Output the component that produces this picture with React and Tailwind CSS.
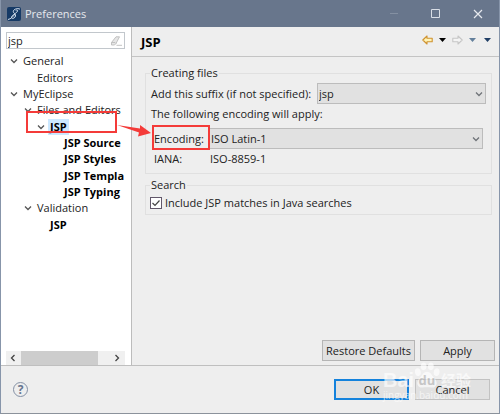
import React from "react";

const tree = [
  { label: "General", pad: "pl-[4px]", open: true },
  { label: "Editors", pad: "pl-[18px]" },
  { label: "MyEclipse", pad: "pl-[4px]", open: true },
  { label: "Files and Editors", pad: "pl-[18px]", open: true },
  { label: "JSP", pad: "pl-[31px]", open: true, bold: true, selected: true },
  { label: "JSP Source", pad: "pl-[45px]", bold: true },
  { label: "JSP Styles", pad: "pl-[45px]", bold: true },
  { label: "JSP Templa", pad: "pl-[45px]", bold: true },
  { label: "JSP Typing", pad: "pl-[45px]", bold: true },
  { label: "Validation", pad: "pl-[18px]", open: true },
  { label: "JSP", pad: "pl-[31px]", bold: true },
];

function Chevron({ className }) {
  return (
    <svg viewBox="0 0 8 8" className={className} fill="none" stroke="currentColor" strokeWidth="1.3" aria-hidden="true">
      <path d="M1 2.500 4 5.500 7 2.500" />
    </svg>
  );
}

function Triangle({ className }) {
  return (
    <svg viewBox="0 0 7 4" className={className} fill="currentColor" aria-hidden="true">
      <path d="M0 0h7L3.5 4z" />
    </svg>
  );
}

function Arrow({ className, fill }) {
  return (
    <svg viewBox="0 0 11 10" className={className} fill={fill} stroke="currentColor" strokeWidth="1.1" strokeLinejoin="round" aria-hidden="true">
      <path d="M.8 5 5 1v2.200h5.200v3.600H5V9z" />
    </svg>
  );
}

function Combo({ id, value, className }) {
  return (
    <div className={`relative h-[21px] ${className}`}>
      <select id={id} defaultValue={value} className="block h-full w-full appearance-none border border-[#bcbcbc] bg-[#e1e1e1] pr-5 pl-px text-[11px] leading-4 outline-none">
        <option>{value}</option>
      </select>
      <Chevron className="pointer-events-none absolute top-[7px] right-[3px] size-2 text-[#707479]" />
    </div>
  );
}

function Group({ title, className, children }) {
  return (
    <fieldset className={`min-w-0 border border-[#e0e0e0] ${className}`}>
      <legend className="ml-1 px-px leading-4">{title}</legend>
      {children}
    </fieldset>
  );
}

function Button({ children, className }) {
  return (
    <button type="button" className={`h-[21px] bg-[#e1e1e1] text-center leading-4 ${className}`}>
      {children}
    </button>
  );
}

function Watermark() {
  return (
    <div className="pointer-events-none absolute right-[25px] bottom-3 flex w-[91px] flex-col text-white opacity-65" aria-hidden="true">
      <div className="flex h-[28px] items-end">
        <span className="w-[31px] font-['Liberation_Sans',sans-serif] text-[20px] leading-[18px] font-bold">Bai</span>
        <span className="relative flex h-[28px] w-[26px] items-end justify-center">
          <svg viewBox="0 0 27 28" className="absolute inset-0 size-full" fill="white">
            <ellipse cx="4" cy="11" rx="3" ry="4" transform="rotate(-12 4 11)" />
            <ellipse cx="10" cy="5" rx="3" ry="4" />
            <ellipse cx="17.500" cy="5" rx="3" ry="4" />
            <ellipse cx="23.500" cy="11" rx="3" ry="4" transform="rotate(12 23.500 11)" />
            <path d="M13.500 10.500c4 0 5 4 7.500 6.500 5 5 2 10.500-2.500 10-4-.5-6-.5-10 0-4.500.5-7.500-5-2.500-10 2.500-2.500 3.500-6.500 7.500-6.500z" />
          </svg>
          <span className="relative text-[13px] leading-[17px] font-bold text-[#b8b8b8]">du</span>
        </span>
        <span className="ml-px font-['Noto_Sans_CJK_SC',sans-serif] text-[15px] leading-[18px] font-bold whitespace-nowrap">经验</span>
      </div>
      <span className="text-[10px] leading-3 whitespace-nowrap">jingyan.baidu.com</span>
    </div>
  );
}

export default function App() {
  return (
    <div className="relative flex min-h-screen flex-col border border-t-0 border-[#8795aa] border-b-[#8b929b] bg-[#eee] font-['Open_Sans','Noto_Sans',sans-serif] text-[11px] leading-4 text-[#222]">
      <header className="flex h-[27px] items-center bg-[#68768c] text-[#e6e9ee]">
        <svg viewBox="0 0 14 14" className="ml-1.5 size-3.5 shrink-0" fill="none" aria-hidden="true">
          <rect width="14" height="14" rx="2" fill="#163a66" />
          <path d="M13 2.200C10.500.8 6.300 2.200 6.300 4.500c0 1.800 2.700 2.300 2.200 4.500-.5 2.500-4 3.200-4 1.300C4.500 8 9.800 6.500 10.500 4c.3-1.200-1-1.500-1.800-.3M1 12.500C4 12 6 9.500 8 7" stroke="#d5e0ed" strokeWidth="1" />
        </svg>
        <h1 className="ml-1 flex-1">Preferences</h1>
        <button type="button" aria-label="Minimize" className="flex w-[42px] justify-center">
          <svg viewBox="0 0 10 10" className="size-2.5" stroke="#8490a2"><path d="M1 4.500h8" /></svg>
        </button>
        <button type="button" aria-label="Maximize" className="flex w-[42px] justify-center">
          <svg viewBox="0 0 10 10" className="size-2.5" fill="none" stroke="#d9dee6"><path d="M.5.5h8v8h-8z" /></svg>
        </button>
        <button type="button" aria-label="Close" className="flex w-[42px] justify-center">
          <svg viewBox="0 0 10 10" className="size-2.5" fill="none" stroke="#e6e9ee" strokeWidth="1.200"><path d="m1 1 8 8M9 1 1 9" /></svg>
        </button>
      </header>

      <div className="flex flex-1 border-b border-[#bfbfbf]">
        <aside className="flex w-[131px] shrink-0 flex-col border-r border-[#bcbcbc] bg-white pt-[5px] pr-1.5 pl-[5px]">
          <div className="flex h-[17px] items-center border border-[#c2c7cc]">
            <input type="text" aria-label="Filter" defaultValue="jsp" className="h-full min-w-0 flex-1 bg-transparent pl-px outline-none" />
            <svg viewBox="0 0 12 10" className="mr-0.5 h-2.5 w-3 shrink-0" fill="#e6e6e6" stroke="#bcbcbc" strokeWidth="0.900" aria-hidden="true">
              <path d="M1.500 6.500 6 .8h3.500L6 7.500l-1.500 1.500h-3zM1.500 6.500H5l1 1M6.500 9.300H12" />
            </svg>
          </div>
          <ul className="mt-1 flex h-[180px] flex-col">
            {tree.map((n, i) => (
              <li key={i} className={`flex flex-1 items-center whitespace-nowrap ${n.pad} ${n.bold ? "font-bold text-black" : ""}`}>
                <span className="flex w-[13px] shrink-0 items-center">
                  {n.open && <Chevron className="size-2 text-[#555]" />}
                </span>
                <span className={n.selected ? "-ml-0.5 bg-[#cce8ff] px-0.5" : ""}>{n.label}</span>
              </li>
            ))}
          </ul>
          <div className="mt-auto flex h-3.5 items-center bg-[#f0f0f0] text-[#444]">
            <Chevron className="mx-[3px] size-2 rotate-90" />
            <div className="ml-px h-full w-[77px] bg-[#cdcdcd]" />
            <Chevron className="mr-1 ml-auto size-2 -rotate-90" />
          </div>
        </aside>

        <main className="flex min-w-0 flex-1 flex-col">
          <div className="flex h-[30px] items-center border-b border-[#c4c4c4] pr-2 pl-[9px]">
            <h2 className="flex-1 text-[13px] font-bold text-black">JSP</h2>
            <div className="flex items-center pb-1">
              <button type="button" aria-label="Back"><Arrow className="h-2.5 w-[11px] text-[#cf922f]" fill="#fff3b5" /></button>
              <button type="button" aria-label="Back history" className="ml-1.5"><Triangle className="h-1 w-[7px] text-black" /></button>
              <button type="button" aria-label="Forward" className="ml-1.5"><Arrow className="h-2.5 w-[11px] rotate-180 text-[#c6c6c6]" fill="#f4f4f4" /></button>
              <button type="button" aria-label="Forward history" className="ml-1.5"><Triangle className="h-1 w-[7px] text-[#64809c]" /></button>
              <button type="button" aria-label="Menu" className="ml-2"><Triangle className="h-1 w-[7px] text-[#213f66]" /></button>
            </div>
          </div>

          <div className="flex flex-col gap-[3px] pt-2 pr-[7px] pl-[13px]">
            <Group title="Creating files" className="h-[109px]">
              <div className="mt-0.5 flex items-center gap-1 pr-[5px] pl-[5px]">
                <label htmlFor="suffix" className="w-[162px] shrink-0 whitespace-nowrap">Add this suffix (if not specified):</label>
                <Combo id="suffix" value="jsp" className="min-w-0 flex-1" />
              </div>
              <p className="mt-0.5 pl-[5px]">The following encoding will apply:</p>
              <div className="mt-1.5 flex items-center pr-2 pl-2">
                <label htmlFor="encoding" className="w-[55px] shrink-0 whitespace-nowrap">Encoding:</label>
                <Combo id="encoding" value="ISO Latin-1" className="min-w-0 flex-1" />
              </div>
              <div className="mt-0.5 flex pl-2">
                <span className="w-14">IANA:</span>
                <span>ISO-8859-1</span>
              </div>
            </Group>
            <Group title="Search" className="h-[38px]">
              <label className="mt-0.5 flex items-center gap-[3px] pl-1 whitespace-nowrap">
                <span className="relative size-3">
                  <input type="checkbox" defaultChecked className="block size-3 appearance-none border border-[#62586a] bg-white" />
                  <svg viewBox="0 0 12 12" className="pointer-events-none absolute inset-0 size-3" fill="none" stroke="#444" strokeWidth="1.200" aria-hidden="true"><path d="m2.500 6 2.500 2.500 4.500-5" /></svg>
                </span>
                Include JSP matches in Java searches
              </label>
            </Group>
          </div>

          <div className="mt-auto flex justify-end gap-[5px] pr-1 pb-1">
            <Button className="w-[93px] border border-[#b5b5b5] whitespace-nowrap">Restore Defaults</Button>
            <Button className="w-[75px] border border-[#b5b5b5]">Apply</Button>
          </div>
        </main>
      </div>

      <footer className="flex h-[47px] items-center gap-1.5 pr-[9px] pl-3">
        <button type="button" aria-label="Help" className="mr-auto flex size-[15px] items-center justify-center rounded-full border border-[#8490a5] text-[12px] leading-3 font-bold text-[#66758f]">?</button>
        <Button className="w-[75px] border-2 border-[#1482dc]">OK</Button>
        <Button className="w-[75px] border border-[#c2c2c2]">Cancel</Button>
      </footer>

      <Watermark />
      <div className="pointer-events-none absolute top-[111px] left-[25px] h-[22px] w-[91px] border-2 border-[#f43b39]" />
      <svg viewBox="0 0 34 14" className="pointer-events-none absolute top-[124px] left-[116px] h-3.5 w-[34px]" fill="#f43b39" aria-hidden="true">
        <path d="M0 1 23 4.500 23 1 34 9 21 12.500 22 8.500z" />
      </svg>
      <div className="pointer-events-none absolute top-[125px] left-[151px] h-[25px] w-[58px] border-2 border-[#f43b39]" />
    </div>
  );
}
